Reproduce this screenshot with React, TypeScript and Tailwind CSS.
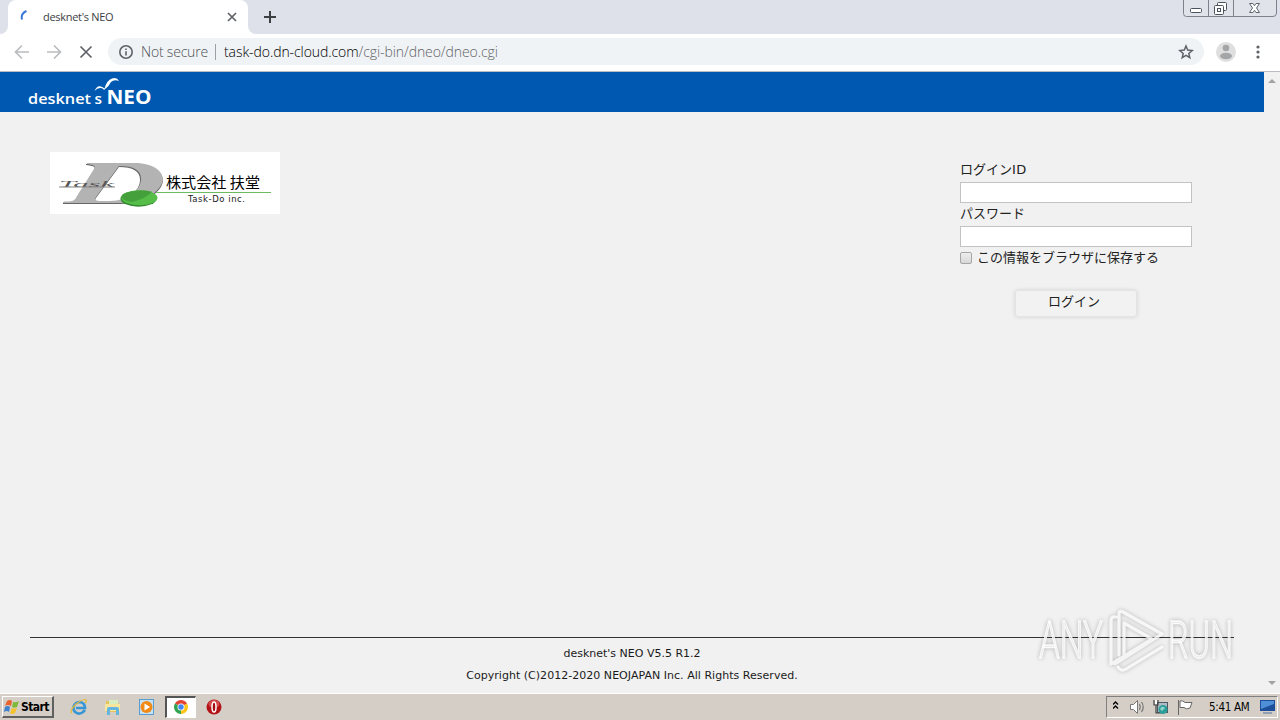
import type { ReactNode } from "react";

const uiFont = "font-['Open_Sans','Noto_Sans',sans-serif]";
const pageFont = "font-['DejaVu_Sans','Noto_Sans_CJK_JP',sans-serif]";
const jpFont = "font-['Noto_Sans_CJK_JP',sans-serif]";

function WindowButtons() {
    return (
        <svg width="94" height="17" className="mr-[3px]" fill="none" stroke="#7c828c">
            <path d="M.5 0V13.500Q.5 16.500 3.500 16.500H90Q93.500 16.500 93.500 13V0M25.500 0V16M50.500 0V16" fill="#e0e3ea"/>
            <rect x="7.500" y="8.500" width="11" height="4" rx="1" stroke="#4d535c" fill="#fff"/>
            <g stroke="#4d535c" fill="#fff">
                <rect x="34.500" y="2.500" width="9" height="8" rx="1"/>
                <rect x="31.500" y="5.500" width="9" height="9" rx="1"/>
                <rect x="34.500" y="8.500" width="3" height="3"/>
            </g>
            <path d="M66.500 3.500H70L71.500 5.700L73 3.500H76.500L73.500 8L76.500 12.500H73L71.500 10.300L70 12.500H66.500L69.500 8Z" stroke="#5f656e" fill="#fff"/>
        </svg>
    );
}

function TabStrip() {
    return (
        <div className="flex h-[34px] items-start bg-[#dee1e9]">
            <div className="h-[34px] w-2 bg-white">
                <div className="h-full rounded-br-lg bg-[#dee1e9]"/>
            </div>
            <div className="flex h-[34px] w-[240px] items-center rounded-t-lg bg-white pl-3">
                <svg width="16" height="16" fill="none" stroke="#3b78d8" strokeWidth="2">
                    <path d="M2 10.500Q.5 4.500 6.500 2"/>
                </svg>
                <span className={`${uiFont} ml-[7px] flex-1 text-[11px] tracking-[-0.300px] text-[#3c4043]`}>desknet's NEO</span>
                <svg width="10" height="10" className="mr-[11px]" stroke="#5f6368" strokeWidth="1.700">
                    <path d="M1 1L9 9M9 1L1 9"/>
                </svg>
            </div>
            <div className="h-[34px] w-2 bg-white">
                <div className="h-full rounded-bl-lg bg-[#dee1e9]"/>
            </div>
            <svg width="12" height="12" className="mt-[11px] ml-2" stroke="#3c4043" strokeWidth="2">
                <path d="M6 0V12M0 6H12"/>
            </svg>
            <div className="flex-1"/>
            <WindowButtons/>
        </div>
    );
}

function Toolbar() {
    return (
        <div className="flex h-[38px] items-center border-b border-[#b9bdc3] bg-white pb-0.5 pl-[14px]">
            <svg width="80" height="16" fill="none" stroke="#babcbe" strokeWidth="1.700">
                <path d="M15 8H2M8 1.500L1.500 8L8 14.500"/>
                <path d="M33 8H46M40 1.500L46.500 8L40 14.500"/>
                <path d="M66.500 2.500L77.500 13.500M77.500 2.500L66.500 13.500" stroke="#5f6368"/>
            </svg>
            <div className="ml-[14px] flex h-[27px] w-[1096px] items-center rounded-full bg-[#f0f3f5] pl-[11px]">
                <svg width="14" height="14" fill="none" stroke="#5f6368" strokeWidth="1.600">
                    <circle cx="7" cy="7" r="6.200"/>
                    <path d="M7 6.200V10.500M7 3.500V5"/>
                </svg>
                <span className={`${uiFont} ml-2 w-[67px] text-sm font-light tracking-[-0.200px] whitespace-nowrap text-[#4c5055]`}>Not secure</span>
                <div className="ml-[7px] h-4 w-px bg-[#9aa0a6]"/>
                <span className={`${uiFont} ml-2 flex-1 text-sm font-light tracking-[-0.080px] text-[#5f6368]`}><span
                    className="text-black">task-do.dn-cloud.com</span>/cgi-bin/dneo/dneo.cgi</span>
                <svg width="16" height="16" viewBox="0 0 16 16" className="mr-[10px]" fill="none" stroke="#5f6368" strokeWidth="1.500">
                    <path d="M8 2L9.700 6.100L14.200 6.500L10.800 9.400L11.800 13.700L8 11.400L4.200 13.700L5.200 9.400L1.800 6.500L6.300 6.100Z"/>
                </svg>
            </div>
            <svg width="20" height="20" className="ml-3">
                <circle cx="10" cy="10" r="10" fill="#dfdfe0"/>
                <circle cx="10" cy="6" r="3.300" fill="#a3a5a7"/>
                <ellipse cx="10" cy="14" rx="6" ry="3.300" fill="#a3a5a7"/>
            </svg>
            <svg width="4" height="14" className="ml-5" fill="#5f6368">
                <circle cx="2" cy="2" r="1.600"/>
                <circle cx="2" cy="7" r="1.600"/>
                <circle cx="2" cy="12" r="1.600"/>
            </svg>
        </div>
    );
}

function NeoLogo() {
    return (
        <svg width="130" height="38" fill="#fff" className={uiFont}>
            <text x="0" y="32" fontSize="14.500" fontWeight="600" textLength="63" lengthAdjust="spacingAndGlyphs">desknet</text>
            <text x="66.500" y="32" fontSize="14.500" fontWeight="600" textLength="7.500" lengthAdjust="spacingAndGlyphs">s</text>
            <text x="78.500" y="32" fontSize="19.500" fontWeight="700" textLength="45" lengthAdjust="spacingAndGlyphs">NEO</text>
            <path d="M66.500 19Q69 13 73 14.500Q75.500 15.500 76.500 16.500Q79 8 84 6.500Q89 5 91 9Q86 7 83 10Q81 14.500 76 18Q75.500 16.500 73 16Q69.500 15.500 66.500 19Z"/>
        </svg>
    );
}

function CompanyLogo() {
    return (
        <svg width="230" height="62" className="bg-white">
            <g fillRule="evenodd">
                <path fill="#666" d="M36 12H84C102 12 113 19 113 29C111 42 94 52 66 52H13V50.500H19C24 50 25 49 27 45L44 18C46 14 43 14 36 13ZM69 15L46 46C44 49 46 50 51 50H60C78 50 90 38 90 28C90 19 83 15 69 15Z"/>
                <path fill="#b3b3b3" d="M37 11H84C102 11 113 18 113 28C110 41 94 51 66 51H14V49.500H19C24 49 25 48 27 44L44 17C46 13 43 13 37 12ZM69 14Q68 15 66 18L46 45C44 48 46 49 51 49H60C79 49 91 37 91 27C91 18 84 14 69 14Z"/>
            </g>
            <text x="9" y="35" fontSize="9" fontStyle="italic" fill="#555" textLength="55" lengthAdjust="spacingAndGlyphs" className="font-['Liberation_Serif',serif]">Task</text>
            <path d="M9 35H65" stroke="#858585"/>
            <ellipse cx="88.500" cy="46.700" rx="18" ry="8" fill="#348b30"/>
            <ellipse cx="89.500" cy="45.700" rx="18" ry="7.500" fill="#57bd49"/>
            <path d="M73 42Q82 38 94 38.500Q101 39 102 40Q95 47 82 50Q69 48 73 42Z" fill="#43a03a"/>
            <path d="M106 40.500H221" stroke="#6cbb61"/>
            <text x="116" y="36" fontSize="14.500" textLength="94" lengthAdjust="spacingAndGlyphs" className={jpFont}>株式会社 扶堂</text>
            <text x="138" y="50" fontSize="8.500" textLength="57" className="font-['DejaVu_Sans',sans-serif]" fill="#222">Task-Do inc.</text>
        </svg>
    );
}

function LoginForm() {
    return (
        <div className={`${jpFont} mt-2 w-[232px] text-[13px] leading-[16px] text-[#222]`}>
            <div className="h-[22px] pt-px">ログイン<span className="font-['DejaVu_Sans'] tracking-[0.300px]">ID</span></div>
            <input className="block h-[21px] w-full border border-[#c3c3c3] bg-white"/>
            <div className="h-[23px] pt-0.5">パスワード</div>
            <input type="password" className="block h-[21px] w-full border border-[#c3c3c3] bg-white"/>
            <div className="flex h-[22px] items-center">
                <div className="size-3 rounded-[2px] border border-[#a5a5a5] bg-linear-to-b from-[#eee] to-[#d8d8d8]"/>
                <span className="ml-[5px] pb-0.5">この情報をブラウザに保存する</span>
            </div>
            <button className="mt-[21px] ml-[55px] block h-[27px] w-[122px] rounded-[3px] border border-[#e4e4e4] bg-[#f2f2f2] pr-1 pb-[5px] leading-[16px] shadow-[0_0_4px_rgba(0,0,0,0.13)]">ログイン</button>
        </div>
    );
}

function Watermark() {
    return (
        <svg width="212" height="84" className="absolute top-[533px] left-[1034px] overflow-visible font-['Roboto',sans-serif] drop-shadow-[0_0_2px_rgba(0,0,0,0.3)]" fill="none" stroke="#fff" strokeOpacity=".8">
            <g fontSize="51" fontWeight="300" fill="#f4f4f4" fillOpacity=".8" strokeWidth="1.300">
                <text x="5" y="53" textLength="64" lengthAdjust="spacingAndGlyphs">ANY</text>
                <text x="134" y="53" textLength="65" lengthAdjust="spacingAndGlyphs">RUN</text>
            </g>
            <path strokeWidth="3.200" strokeLinejoin="round" strokeLinecap="round"
                  d="M82 12Q77 11 77 16V59L118 34L90 18V51M85 50V9Q85 5 89 7L128 29L81 59M84 62Q87 67 92 64L128 42"/>
        </svg>
    );
}

function Page() {
    return (
        <div className="flex h-[621px] bg-[#f1f1f1]">
            <div className="relative flex w-[1264px] flex-col">
                <div className="h-10 bg-[#0058b0] pl-7">
                    <NeoLogo/>
                </div>
                <div className="flex h-[525px] items-start justify-between pt-10 pr-[72px] pl-[50px]">
                    <CompanyLogo/>
                    <LoginForm/>
                </div>
                <div className={`${pageFont} mr-[30px] ml-[30px] border-t border-[#333] pt-[5px] text-center text-[11px] leading-[22px] text-[#1a1a1a]`}>
                    <p>desknet's NEO V5.5 R1.2</p>
                    <p className="tracking-[0.030px]">Copyright (C)2012-2020 NEOJAPAN Inc. All Rights Reserved.</p>
                </div>
                <Watermark/>
            </div>
            <div className="flex w-4 flex-col items-center justify-between bg-[#f1f1f1] pt-[7px] pb-2">
                <svg width="8" height="4" fill="#a3a3a3"><path d="M0 4L4 0L8 4Z"/></svg>
                <svg width="8" height="4" fill="#a3a3a3"><path d="M0 0L4 4L8 0Z"/></svg>
            </div>
        </div>
    );
}

function TaskIcon({ children }: { children: ReactNode }) {
    return <svg width="18" height="18" viewBox="0 0 18 18" fill="none">{children}</svg>;
}

function QuickLaunch() {
    return (
        <div className="ml-4 flex items-center">
            <TaskIcon>
                <path d="M15 12Q12 16 8 15.500Q3 14 3.500 9Q5 4 10 4Q15 5 15 10H6" stroke="#3796d6" strokeWidth="2.700"/>
                <path d="M2 15Q-1 13 6 6Q14 0 16 2Q17 3 15 5" stroke="#e5b93a" strokeWidth="1.300"/>
            </TaskIcon>
            <div className="ml-4 flex">
                <TaskIcon>
                    <path d="M2 3H8L9 5H15V14H2Z" fill="#e4c35b"/>
                    <path d="M5 2H14V7H5Z" fill="#d8eec0"/>
                    <path d="M1 6H16V13H1Z" fill="#f7e69b"/>
                    <path d="M3 17V11Q3 9 5 9H13Q15 9 15 11V17H12V12H6V17Z" fill="#64b5df"/>
                </TaskIcon>
            </div>
            <div className="ml-4 flex">
                <TaskIcon>
                    <rect x="1.500" y="1.500" width="14" height="15" fill="#c5e2f7" stroke="#5a9bd0"/>
                    <circle cx="8.500" cy="9" r="6" fill="#f28a16"/>
                    <path d="M6.500 5.500L12 9L6.500 12.500Z" fill="#fff"/>
                </TaskIcon>
            </div>
            <div className="ml-[9px] flex h-[22px] w-[31px] items-center justify-center border-t-2 border-r border-b border-l-2 border-t-[#555] border-r-white border-b-white border-l-[#555] bg-white pb-px">
                <svg width="14" height="14" viewBox="-7 -7 14 14">
                    <path d="M0 0L-6.060 -3.500A7 7 0 0 1 6.060 -3.500Z" fill="#e14335"/>
                    <path d="M0 0L6.060 -3.500A7 7 0 0 1 0 7Z" fill="#fbc51c"/>
                    <path d="M0 0L0 7A7 7 0 0 1 -6.060 -3.500Z" fill="#32a350"/>
                    <circle r="3.500" fill="#fff"/>
                    <circle r="2.700" fill="#4285f4"/>
                </svg>
            </div>
            <svg width="16" height="16" className="ml-[10px]">
                <circle cx="8" cy="8" r="7.500" fill="#b31217"/>
                <ellipse cx="8" cy="5" rx="5.500" ry="4" fill="#d44b4b"/>
                <ellipse cx="8" cy="8" rx="2" ry="5" fill="#a30e12" stroke="#fff" strokeWidth="1.500"/>
            </svg>
        </div>
    );
}

function Tray() {
    return (
        <div className="mr-0.5 flex h-[22px] w-[172px] items-center border border-t-[#808080] border-r-white border-b-white border-l-[#808080] pl-1.5">
            <svg width="88" height="18" fill="none">
                <path d="M1 7.500L3.500 5L6 7.500M1 11.500L3.500 9L6 11.500" transform="translate(-1 -1)" stroke="#000" strokeWidth="1.400"/>
                <g transform="translate(16 1)" stroke="#777">
                    <path d="M1.500 5.500H4.500L8.500 1.500V14.500L4.500 10.500H1.500Z" fill="#fff"/>
                    <path d="M10.500 5Q12 8 10.500 11M12.500 3Q16 8 12.500 13" strokeWidth="1.200"/>
                </g>
                <g transform="translate(40 1)">
                    <rect x="4.500" y="3.500" width="10" height="10" fill="#aebcc5" stroke="#4c5960"/>
                    <path d="M1 1V6H5V1M3 6V14H8" stroke="#444" strokeWidth="1.200"/>
                    <path d="M2 1H4V5H2Z" fill="#fff"/>
                    <circle cx="10" cy="10.500" r="4.500" fill="#2c9d9a"/>
                    <path d="M7 10Q9 6 12 9L9 12Z" fill="#8fd8c8"/>
                </g>
                <path d="M65.500 2V17M67 3Q70 2 72 4.500H79L77 10Q73 12 71 9.500H67Z" fill="#fff" stroke="#666"/>
            </svg>
            <span className="ml-2 w-[42px] pt-px font-['DejaVu_Sans_Condensed','DejaVu_Sans',sans-serif] text-[11.500px] tracking-[-0.300px] whitespace-nowrap">5:41 AM</span>
            <svg width="17" height="16" className="ml-2">
                <path d="M1 1H16V12H1Z" fill="#1c4e99"/>
                <path d="M2 2H15V5L2 10Z" fill="#4f8fd8"/>
                <path d="M4 13H13V15H4Z" fill="#8fa0b5"/>
            </svg>
        </div>
    );
}

function Taskbar() {
    return (
        <div className="flex h-[27px] items-center border-t border-white bg-[#d4cec7]">
            <div className="ml-0.5 flex h-[22px] w-[52px] items-center border-t border-r-2 border-b-2 border-l border-t-white border-r-[#606060] border-b-[#606060] border-l-white">
                <svg width="16" height="16" className="ml-px shrink-0">
                    <path d="M3 2Q6 0 8 2L7 7Q4 5 1 7Z" fill="#e8642c"/>
                    <path d="M9 3Q12 4 15 2L13 8Q11 9 8 8Z" fill="#7fb938"/>
                    <path d="M1 8Q4 6 6 8L5 13Q3 11 0 13Z" fill="#3e82cf"/>
                    <path d="M8 9Q10 10 13 9L11 14Q8 16 6 14Z" fill="#f5c22c"/>
                </svg>
                <span className="ml-px pt-px font-['DejaVu_Sans_Condensed','DejaVu_Sans',sans-serif] text-[12px] font-bold tracking-[-0.600px]">Start</span>
            </div>
            <QuickLaunch/>
            <div className="flex-1"/>
            <Tray/>
        </div>
    );
}

export default function App() {
    return (
        <div className="h-[720px] w-[1280px] overflow-hidden text-black">
            <TabStrip/>
            <Toolbar/>
            <Page/>
            <Taskbar/>
        </div>
    );
}
